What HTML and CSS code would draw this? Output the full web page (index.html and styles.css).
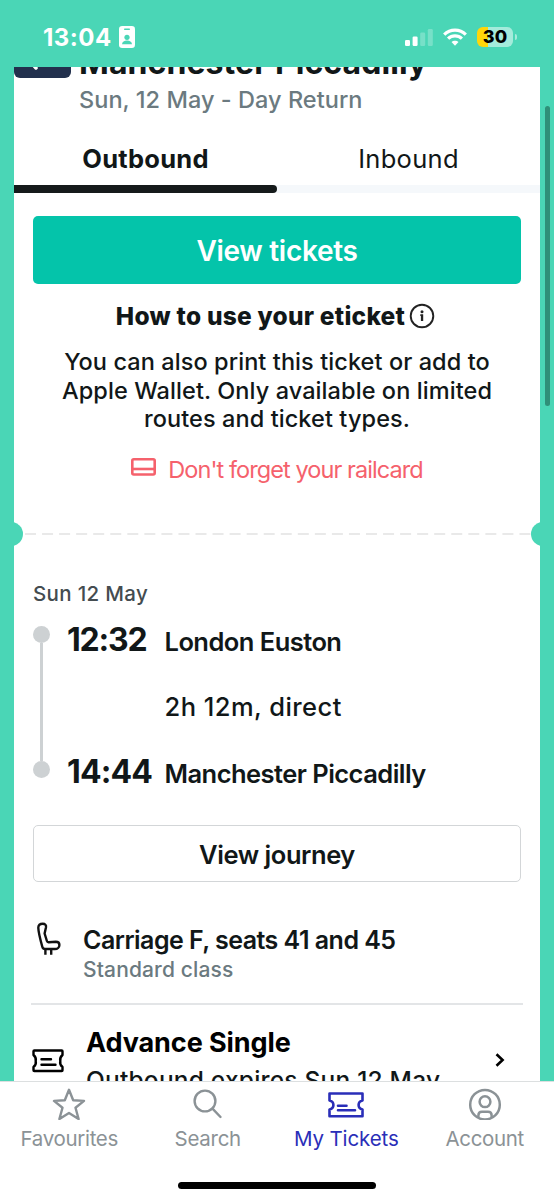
FILE: index.html
```html
<!DOCTYPE html>
<html lang="en">
<head>
<meta charset="utf-8">
<title>My Tickets</title>
<link rel="stylesheet" href="styles.css">
</head>
<body>
<div class="phone">
  <header class="status">
    <div class="clock"><span class="clock-time">13:04</span>
      <svg class="badge-icon" width="16" height="22" viewBox="0 0 16 22"><rect width="16" height="22" rx="3.2" fill="#fff"/><rect x="5" y="2.4" width="6" height="1.5" rx=".7" fill="#4ad6b6"/><circle cx="8" cy="11.3" r="2.6" fill="#4ad6b6"/><path d="M3 18.3c.3-2.5 2.2-3.7 5-3.7s4.7 1.2 5 3.7z" fill="#4ad6b6"/></svg>
    </div>
    <div class="indicators">
      <svg width="28" height="18" viewBox="0 0 28 18" fill="#fff"><rect x="0" y="12" width="5" height="6" rx="1.3"/><rect x="7.6" y="8.5" width="5" height="9.5" rx="1.3"/><rect x="15.2" y="4.5" width="5" height="13.5" rx="1.3" opacity=".25"/><rect x="22.8" y="1" width="5" height="17" rx="1.3" opacity=".25"/></svg>
      <svg width="24" height="18" viewBox="0 0 24 18" fill="none" stroke="#fff" stroke-width="3.2"><path d="M1.2 6.6C7.2.7 16.8.7 22.8 6.6"/><path d="M5.1 10.7c3.900-3.700 9.900-3.700 13.800 0"/><path d="M12 17.700l-3.500-3.600c1.900-1.900 5.100-1.900 7 0z" fill="#fff" stroke="none"/></svg>
      <div class="battery"><span>30</span></div>
    </div>
  </header>

  <main class="scroll">
    <section class="card">
      <div class="trip">
        <div class="back"><svg width="57" height="56" viewBox="0 0 57 56" fill="none" stroke="#fff" stroke-width="3.5" stroke-linecap="round"><path d="M30 36H13M22 46l-9-10 9-10"/></svg></div>
        <div class="trip-text">
          <h1>Manchester Piccadilly</h1>
          <p>Sun, 12 May - Day Return</p>
        </div>
      </div>
      <div class="tabs"><div class="tab tab-on">Outbound</div><div class="tab">Inbound</div></div>
      <div class="track"><div class="track-on"></div></div>

      <div class="primary">View tickets</div>
      <div class="howto"><span>How to use your eticket</span>
        <svg width="26" height="26" viewBox="0 0 26 26"><circle cx="13" cy="13" r="11.3" fill="none" stroke="#222" stroke-width="1.9"/><circle cx="13" cy="8.8" r="1.5" fill="#222"/><path d="M11.300 11.300h2.900V18h-2.300v-5h-.6z" fill="#222"/></svg>
      </div>
      <p class="note">You can also print this ticket or add to<br>Apple Wallet. Only available on limited<br>routes and ticket types.</p>
      <div class="railcard">
        <svg width="25" height="18" viewBox="0 0 25 18" fill="none" stroke="#f5616c" stroke-width="2.6"><rect x="1.300" y="1.300" width="22.400" height="15.200" rx="1.500"/><path d="M1 11h23"/></svg>
        <span>Don't forget your railcard</span>
      </div>

      <div class="tear"><i class="notch notch-l"></i><svg class="dashes" width="508" height="2"><path d="M2 1H508" stroke="#e2e2e2" stroke-width="1.7" stroke-dasharray="11 6.05"/></svg><i class="notch notch-r"></i></div>

      <div class="date">Sun 12 May</div>
      <div class="timeline">
        <div class="rail"><i></i><b></b><i></i></div>
        <div class="stops">
          <div class="stop"><span class="time">12:32</span><span class="place">London Euston</span></div>
          <div class="duration">2h 12m, direct</div>
          <div class="stop"><span class="time time-b">14:44</span><span class="place">Manchester Piccadilly</span></div>
        </div>
      </div>
      <div class="secondary">View journey</div>

      <div class="seats">
        <svg width="26" height="34" viewBox="0 0 26 34" fill="none" stroke="#111" stroke-width="2.400" stroke-linejoin="round" stroke-linecap="butt"><path d="M10 5.200L8.600 11.500l2.300 7.500c.3 1 .9 1.300 1.900 1.200l7-.5c2.200 0 3.600 1.200 3.600 3.200 0 2.300-1.900 4.100-4.500 4.100H9.200c-1.500 0-2.500-.8-2.900-2.300C4.400 18 2.500 11 2.300 5.800c0-2.800 1.500-4 4.500-4 2.300 0 3.600 1.300 3.200 3.400z"/><path d="M9.400 27.200V32.800M15.200 27.200V32.800"/></svg>
        <div><div class="seat-title">Carriage F, seats 41 and 45</div><div class="seat-sub">Standard class</div></div>
      </div>
      <div class="rule"></div>
      <div class="fare">
        <svg class="fare-icon" width="32" height="24" viewBox="0 0 32 24" fill="none" stroke="#000" stroke-width="2.400" stroke-linejoin="round" stroke-linecap="round"><path d="M2.300 1.500H29.700Q30.500 1.500 30.500 2.300V6Q27.500 8.500 28.300 12Q27.500 15.500 30.500 18V21.200Q30.500 22 29.700 22H2.300Q1.500 22 1.500 21.200V18Q4.500 15.500 3.700 12Q4.500 8.500 1.500 6V2.300Q1.500 1.500 2.300 1.500z"/><path d="M9.500 10.300h9.500M9.500 15.700h14"/></svg>
        <div class="fare-text"><div class="fare-title">Advance Single</div><div class="fare-sub">Outbound expires Sun 12 May</div></div>
        <svg class="chev" width="10" height="14" viewBox="0 0 10 14" fill="none" stroke="#000" stroke-width="2.600"><path d="M1.500 1.200L7.600 7l-6.100 5.800"/></svg>
      </div>
    </section>
    <div class="scrollbar"></div>
  </main>

  <nav class="nav">
    <div class="items">
      <div class="item"><svg width="34" height="34" viewBox="0 0 34 34" fill="none" stroke="#8b9296" stroke-width="2.400" stroke-linejoin="round"><path d="M17 3.800L21.200 14.300L32 14.900L23.500 21.700L26.600 33L17 26.900L7.400 33L10.500 21.700L2 14.900L12.800 14.300z"/></svg><span>Favourites</span></div>
      <div class="item"><svg width="34" height="34" viewBox="0 0 34 34" fill="none" stroke="#8b9296" stroke-width="2.400" stroke-linecap="round"><circle cx="14" cy="15" r="10.400"/><path d="M21.500 22.700l8 8.300"/></svg><span class="l2">Search</span></div>
      <div class="item item-on"><svg width="38" height="34" viewBox="0 0 38 34" fill="none" stroke="#2a2eb8" stroke-width="2.600" stroke-linejoin="round" stroke-linecap="round"><path d="M2.500 7.500H35.500V14.500Q31.600 15.300 31.600 19Q31.600 22.700 35.500 23.500V30.300H2.500V23.500Q6.400 22.700 6.400 19Q6.400 15.300 2.500 14.500z"/><path d="M11 19.700h8.500M11 24.200h17"/></svg><span class="l3">My Tickets</span></div>
      <div class="item"><svg width="34" height="34" viewBox="0 0 34 34" fill="none" stroke="#8b9296" stroke-width="2.500"><circle cx="17" cy="18.700" r="14.800"/><circle cx="17" cy="15.700" r="5.400"/><path d="M10.400 31.700v-2.500c0-2.200 1.400-3.500 3.500-3.500h6.200c2.100 0 3.500 1.300 3.500 3.500v2.500"/></svg><span class="l4">Account</span></div>
    </div>
    <div class="home"></div>
  </nav>
</div>
</body>
</html>
```
FILE: styles.css
```css
* { box-sizing: border-box; }
body { margin: 0; font-family: Inter, "Liberation Sans", sans-serif; color: #111718; }
h1, p { margin: 0; }
svg { display: block; flex: none; }
.phone { width: 554px; height: 1200px; display: flex; flex-direction: column; overflow: hidden; background: #4ad6b6; white-space: nowrap; }

.status { height: 67px; flex: none; display: flex; justify-content: space-between; padding: 22px 38px 0 43px; }
.clock { display: flex; height: 30px; align-items: center; gap: 7px; color: #fff; }
.clock-time { font-size: 24px; font-weight: 700; letter-spacing: .5px; }
.indicators { display: flex; height: 30px; align-items: center; gap: 10px; padding-right: 3px; }
.battery { position: relative; width: 36px; height: 20px; border-radius: 6px; background: linear-gradient(90deg, #ffd60a 11px, #a4ebdb 11px); color: #000; font-size: 18px; font-weight: 800; line-height: 20px; text-align: center; }
.battery::after { content: ""; position: absolute; left: 37.5px; top: 7px; width: 2px; height: 6px; border-radius: 0 2px 2px 0; background: #a4ebdb; }

.scroll { position: relative; height: 1014px; flex: none; overflow: hidden; padding: 0 14px; }
.card { background: #fff; height: 1050px; display: flex; flex-direction: column; overflow: hidden; }
.scrollbar { position: absolute; left: 545px; top: 39px; width: 5px; height: 300px; border-radius: 3px; background: #2f9079; }

.trip { display: flex; gap: 8px; margin-top: -45px; height: 92px; }
.back { width: 57px; height: 56px; background: #22304d; border-radius: 6px; }
.trip-text { padding-top: 22px; }
h1 { font-size: 32px; line-height: 38px; font-weight: 700; letter-spacing: .07px; }
.trip-text p { margin-top: 3px; font-size: 23.5px; line-height: 29px; font-weight: 500; letter-spacing: .04px; color: #6b7a80; }
.tabs { display: flex; height: 71px; padding-top: 30px; }
.tab { flex: 1; text-align: center; font-size: 25.5px; line-height: 30px; font-weight: 400; letter-spacing: .3px; }
.tab-on { font-weight: 700; letter-spacing: .25px; }
.track { height: 8px; background: #f5f8fb; }
.track-on { width: 263px; height: 8px; border-radius: 0 4px 4px 0; background: #151a1b; }

.primary { margin: 23px 19px 0; height: 68px; padding-top: 1px; border-radius: 5px; background: #04c4aa; color: #fff; text-align: center; font-size: 28px; line-height: 69px; font-weight: 600; letter-spacing: -.3px; }
.howto { display: flex; justify-content: center; align-items: center; gap: 4px; margin: 17px 3px 0 0; height: 30px; font-size: 24.5px; line-height: 32px; font-weight: 800; letter-spacing: .24px; }
.note { margin-top: 17px; text-align: center; font-size: 23.5px; line-height: 28.67px; font-weight: 500; letter-spacing: .08px; }
.railcard { display: flex; justify-content: center; gap: 12px; margin-top: 21px; height: 30px; color: #f5616c; font-size: 23.5px; line-height: 30px; letter-spacing: -.93px; }
.railcard svg { margin-top: 3px; }
.tear { display: flex; align-items: center; height: 24px; margin-top: 37px; }
.notch { width: 24px; height: 24px; border-radius: 50%; background: #4ad6b6; flex: none; }
.notch-l { margin-left: -15px; }
.notch-r { margin-right: -15px; }

.date { margin: 36px 0 0 19px; font-size: 20.5px; line-height: 24px; font-weight: 500; letter-spacing: .33px; color: #444c50; }
.timeline { display: flex; gap: 17px; margin: 15px 0 0 19px; height: 170px; }
.rail { width: 17px; margin-top: 5px; height: 152px; display: flex; flex-direction: column; align-items: center; }
.rail i { width: 17px; height: 17px; border-radius: 50%; background: #cdd1d3; flex: none; }
.rail b { width: 3px; flex: 1; background: #cdd1d3; }
.stop { display: flex; align-items: baseline; height: 38px; line-height: 38px; }
.time { width: 97.5px; font-size: 32px; font-weight: 700; letter-spacing: -1.2px; }
.time-b { letter-spacing: -.85px; }
.place { font-size: 25.5px; font-weight: 600; letter-spacing: -.54px; }
.duration { margin: 29px 0 27px 97.5px; font-size: 25.5px; line-height: 38px; font-weight: 500; letter-spacing: .45px; }
.secondary { margin: 34px 19px 0; height: 57px; border: 1.5px solid #d3d6d8; border-radius: 5px; text-align: center; font-size: 25.5px; line-height: 57px; font-weight: 600; letter-spacing: -.44px; }

.seats { display: flex; gap: 21px; margin: 40px 0 0 22px; height: 60px; }
.seats > div { padding-top: 3px; }
.seats svg { margin-top: 0; }
.seat-title { font-size: 25px; line-height: 30px; font-weight: 600; letter-spacing: -.52px; }
.seat-sub { margin-top: 2px; font-size: 21px; line-height: 26px; font-weight: 500; letter-spacing: .14px; color: #6b7a80; }
.rule { margin: 21px 17px 0; height: 2px; background: #e3e5e7; flex: none; }
.fare { display: flex; margin: 21px 0 0 18px; }
.fare-icon { margin-top: 23px; }
.fare-text { margin-left: 22px; width: 409px; }
.fare-title { font-size: 27px; line-height: 34px; font-weight: 700; letter-spacing: -.08px; color: #000; }
.fare-sub { margin-top: 5px; font-size: 24.5px; line-height: 30px; font-weight: 500; letter-spacing: .21px; }
.chev { margin-top: 27px; }

.nav { height: 119px; flex: none; background: #fff; border-top: 1px solid #dcdfe0; }
.items { display: flex; }
.item { flex: 1; display: flex; flex-direction: column; align-items: center; padding-top: 4px; color: #8b9296; font-size: 20.5px; line-height: 24px; letter-spacing: -.31px; }
.item span { margin-top: 7px; }
.item-on { color: #2a2eb8; }
.l2 { letter-spacing: -.28px; }
.l3 { letter-spacing: -.12px; }
.l4 { letter-spacing: -.35px; }
.home { width: 198px; height: 7px; margin: 31px auto 0; border-radius: 4px; background: #000; }
```
